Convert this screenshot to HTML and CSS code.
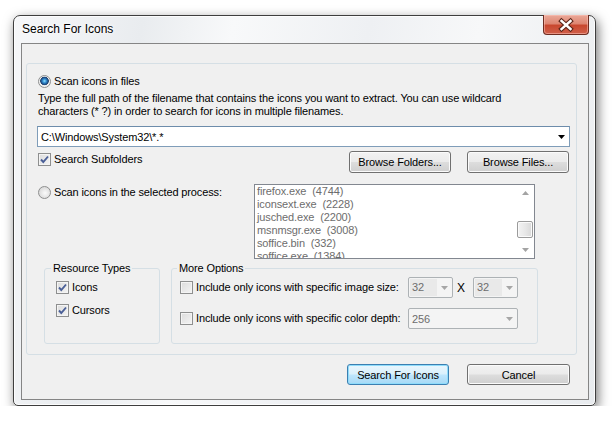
FILE: index.html
```html
<!DOCTYPE html>
<html lang="en">
<head>
    <meta charset="UTF-8">
    <title>Search For Icons</title>
    <link rel="stylesheet" href="styles.css">
</head>
<body>
    <div class="window">
        <div class="titlebar">
            <span class="title">Search For Icons</span>
            <div class="close-btn">
                <svg width="46" height="20" viewBox="0 0 46 20">
                    <path d="M18.5 6 L27.5 14 M27.5 6 L18.5 14" stroke="#5a2418" stroke-width="4.6" stroke-linecap="square" fill="none"/>
                    <path d="M18.5 6 L27.5 14 M27.5 6 L18.5 14" stroke="#fff" stroke-width="2.4" stroke-linecap="square" fill="none"/>
                </svg>
            </div>
        </div>
        <div class="client">
            <div class="main-group">
                <div class="radio-row">
                    <span class="radio checked"></span>
                    <span>Scan icons in files</span>
                </div>
                <p class="hint">Type the full path of the filename that contains the icons you want to extract. You can use wildcard<br>characters (* ?) in order to search for icons in multiple filenames.</p>
                <div class="combo path-combo">
                    <span class="combo-value">C:\Windows\System32\*.*</span>
                    <svg class="arrow" width="7" height="4" viewBox="0 0 7 4"><path d="M0 0h7L3.5 4z" fill="#000"/></svg>
                </div>
                <div class="row subfolders-row">
                    <div class="check-row">
                        <span class="checkbox checked">
                            <svg width="11" height="11" viewBox="0 0 11 11"><path d="M2 5.5 L4.3 8 L9 2.5" stroke="#4a5f97" stroke-width="1.9" fill="none"/></svg>
                        </span>
                        <span>Search Subfolders</span>
                    </div>
                    <button class="btn browse-folders">Browse Folders...</button>
                    <button class="btn">Browse Files...</button>
                </div>
                <div class="row process-row">
                    <div class="radio-row process-label">
                        <span class="radio"></span>
                        <span>Scan icons in the selected process:</span>
                    </div>
                    <div class="listbox">
                        <div class="list-items">
                            <div class="list-item">firefox.exe  (4744)</div>
                            <div class="list-item">iconsext.exe  (2228)</div>
                            <div class="list-item">jusched.exe  (2200)</div>
                            <div class="list-item">msnmsgr.exe  (3008)</div>
                            <div class="list-item">soffice.bin  (332)</div>
                            <div class="list-item">soffice.exe  (1384)</div>
                        </div>
                        <div class="scrollbar">
                            <svg class="scroll-arrow" width="7" height="4" viewBox="0 0 7 4"><path d="M0 4h7L3.5 0z" fill="#a3a3a3"/></svg>
                            <div class="scroll-track"><div class="scroll-thumb"></div></div>
                            <svg class="scroll-arrow" width="7" height="4" viewBox="0 0 7 4"><path d="M0 0h7L3.5 4z" fill="#a3a3a3"/></svg>
                        </div>
                    </div>
                </div>
                <div class="row options-row">
                    <fieldset class="group resource-types">
                        <legend>Resource Types</legend>
                        <div class="check-row first">
                            <span class="checkbox checked">
                                <svg width="11" height="11" viewBox="0 0 11 11"><path d="M2 5.5 L4.3 8 L9 2.5" stroke="#4a5f97" stroke-width="1.9" fill="none"/></svg>
                            </span>
                            <span>Icons</span>
                        </div>
                        <div class="check-row second">
                            <span class="checkbox checked">
                                <svg width="11" height="11" viewBox="0 0 11 11"><path d="M2 5.5 L4.3 8 L9 2.5" stroke="#4a5f97" stroke-width="1.9" fill="none"/></svg>
                            </span>
                            <span>Cursors</span>
                        </div>
                    </fieldset>
                    <fieldset class="group more-options">
                        <legend>More Options</legend>
                        <div class="option-row first">
                            <div class="check-row option-label">
                                <span class="checkbox"></span>
                                <span>Include only icons with specific image size:</span>
                            </div>
                            <div class="combo small-combo disabled">
                                <span class="combo-value edit">32</span>
                                <svg class="arrow" width="7" height="4" viewBox="0 0 7 4"><path d="M0 0h7L3.5 4z" fill="#a6a6a6"/></svg>
                            </div>
                            <span class="times">X</span>
                            <div class="combo small-combo disabled">
                                <span class="combo-value edit">32</span>
                                <svg class="arrow" width="7" height="4" viewBox="0 0 7 4"><path d="M0 0h7L3.5 4z" fill="#a6a6a6"/></svg>
                            </div>
                        </div>
                        <div class="option-row second">
                            <div class="check-row option-label">
                                <span class="checkbox"></span>
                                <span>Include only icons with specific color depth:</span>
                            </div>
                            <div class="combo depth-combo disabled">
                                <span class="combo-value">256</span>
                                <svg class="arrow" width="7" height="4" viewBox="0 0 7 4"><path d="M0 0h7L3.5 4z" fill="#a6a6a6"/></svg>
                            </div>
                        </div>
                    </fieldset>
                </div>
            </div>
            <div class="dialog-buttons">
                <button class="btn default">Search For Icons</button>
                <button class="btn cancel">Cancel</button>
            </div>
        </div>
    </div>
</body>
</html>
```

FILE: styles.css
```css
body {
    margin: 0;
    background-color: #fff;
    font-family: "Liberation Sans", Arial, sans-serif;
    font-size: 11px;
    letter-spacing: -0.13px;
    color: #000;
}
.window {
    box-sizing: border-box;
    width: 583px;
    height: 391px;
    margin: 15px 0 0 13px;
    padding: 0 6px 5px 7px;
    border: 1px solid #3e3e3e;
    border-radius: 7px 7px 5px 5px;
    background: linear-gradient(100deg, #f6f7f9 0%, #e9ecef 20%, #f8f9fa 34%, #eef0f3 55%, #f7f8f9 72%, #e8ebee 100%);
    box-shadow: 2px 4px 12px rgba(0, 0, 0, 0.55), inset 0 0 0 1px rgba(255, 255, 255, 0.8);
    display: flex;
    flex-direction: column;
}
.titlebar {
    height: 27px;
    flex-shrink: 0;
    display: flex;
    align-items: flex-start;
    justify-content: space-between;
}
.title {
    margin: 6px 0 0 1px;
    font-size: 12px;
    line-height: 15px;
    letter-spacing: 0;
    text-shadow: 0 0 6px #fff, 0 0 3px #fff;
}
.close-btn {
    box-sizing: border-box;
    width: 46px;
    height: 20px;
    margin-top: -1px;
    border: 1px solid #6e2c20;
    border-top: none;
    border-radius: 0 0 4px 4px;
    background: linear-gradient(#eaa999 0%, #de8672 45%, #c9482f 55%, #d0604a 100%);
    box-shadow: inset 0 0 0 1px rgba(255, 200, 190, 0.5);
}
.close-btn svg {
    display: block;
    margin: 0 0 0 -1px;
}
.client {
    flex: 1;
    box-sizing: border-box;
    border: 1px solid #858585;
    background-color: #f0f0f0;
}
.main-group {
    box-sizing: border-box;
    width: 551px;
    height: 292px;
    margin: 19px 0 0 4px;
    padding: 11px 7px 0 11px;
    border: 1px solid #d5dfe5;
    border-radius: 3px;
}
.radio-row, .check-row {
    display: flex;
    align-items: center;
    height: 13px;
    line-height: 13px;
    white-space: nowrap;
}
.radio {
    box-sizing: border-box;
    width: 13px;
    height: 13px;
    margin-right: 3px;
    border: 1px solid #8e8f8f;
    border-radius: 50%;
    background: radial-gradient(circle at 55% 55%, #fbfbfb 0%, #e2e2e2 55%, #cfcfcf 100%);
    flex-shrink: 0;
}
.radio.checked {
    background: radial-gradient(circle at 50% 45%, #9be0ff 0, #3a9ad9 1.6px, #1d4f8c 3.4px, #27476e 4px, #eeeeee 4.6px, #f6f6f6 100%);
}
.checkbox {
    box-sizing: border-box;
    width: 13px;
    height: 13px;
    margin-right: 3px;
    border: 1px solid #8e8f8f;
    background: linear-gradient(135deg, #dcdcdc 0%, #f4f4f4 100%);
    box-shadow: inset 0 0 0 1px #f4f4f4;
    flex-shrink: 0;
}
.checkbox svg {
    display: block;
}
.hint {
    margin: 4px 0 0;
    line-height: 13px;
    white-space: nowrap;
}
.combo {
    box-sizing: border-box;
    display: flex;
    align-items: center;
    height: 21px;
    border: 1px solid #abadb3;
    background-color: #fff;
}
.combo .arrow {
    margin-left: auto;
    margin-right: 4px;
}
.path-combo {
    margin: 8px -1px 0;
    border-color: #7f9db9;
    border-top-color: #6d8cab;
}
.path-combo .combo-value {
    padding-left: 3px;
}
.row {
    display: flex;
}
.subfolders-row {
    margin-top: 4px;
    height: 22px;
}
.subfolders-row .check-row {
    margin-top: 2px;
}
.browse-folders {
    margin-left: auto;
    margin-right: 16px;
}
.btn {
    box-sizing: border-box;
    width: 102px;
    height: 22px;
    padding: 0;
    border: 1px solid #707070;
    border-radius: 3px;
    background: linear-gradient(#f2f2f2 0%, #ebebeb 48%, #dddddd 52%, #cfcfcf 100%);
    box-shadow: inset 0 0 0 1px #fbfbfb;
    font-family: "Liberation Sans", Arial, sans-serif;
    font-size: 11px;
    letter-spacing: -0.13px;
    color: #000;
}
.process-row {
    margin-top: 11px;
}
.process-label {
    width: 216px;
    margin-top: 2px;
}
.listbox {
    box-sizing: border-box;
    display: flex;
    width: 281px;
    height: 75px;
    border: 1px solid #828790;
    background-color: #fff;
    color: #6d6d6d;
}
.list-items {
    flex: 1;
    overflow: hidden;
}
.list-item {
    padding-left: 2px;
    line-height: 13px;
    white-space: pre;
}
.scrollbar {
    width: 17px;
    display: flex;
    flex-direction: column;
    align-items: center;
}
.scroll-arrow {
    margin: 6px 0;
}
.scroll-track {
    flex: 1;
    width: 100%;
}
.scroll-thumb {
    box-sizing: border-box;
    width: 16px;
    height: 17px;
    margin: 20px 0 0 0;
    border: 1px solid #9b9b9b;
    border-radius: 2px;
    background: linear-gradient(90deg, #f3f3f3 0%, #e8e8e8 50%, #d8d8d8 100%);
    box-shadow: inset 0 0 0 1px #fafafa;
}
.options-row {
    margin-top: 3px;
}
.group {
    box-sizing: border-box;
    height: 82px;
    margin: 0;
    padding: 0;
    border: 1px solid #d5dfe5;
    border-radius: 3px;
}
.group legend {
    margin-left: 6px;
    padding: 0 2px;
    line-height: 13px;
}
.resource-types {
    width: 116px;
    margin-left: 6px;
}
.resource-types .check-row {
    margin-left: 11px;
}
.resource-types .first {
    margin-top: 6px;
}
.resource-types .second {
    margin-top: 10px;
}
.more-options {
    width: 367px;
    margin-left: 11px;
}
.more-options legend {
    margin-left: 5px;
}
.option-row {
    display: flex;
    align-items: center;
    height: 21px;
    margin-left: 8px;
}
.option-row.first {
    margin-top: 2px;
}
.option-row.second {
    margin-top: 10px;
}
.option-label {
    width: 228px;
}
.combo.disabled {
    border-color: #adb2b5;
    border-radius: 2px;
    background-color: #f4f4f4;
    color: #6d6d6d;
}
.small-combo {
    width: 45px;
}
.combo-value.edit {
    padding: 0 2px;
    height: 17px;
    line-height: 17px;
    width: 23px;
    margin-left: 1px;
    background-color: #e9e9e9;
}
.times {
    box-sizing: border-box;
    width: 20px;
    padding-left: 4px;
    font-size: 12px;
}
.depth-combo {
    width: 110px;
    padding-left: 3px;
}
.dialog-buttons {
    display: flex;
    justify-content: flex-end;
    margin-top: 9px;
    padding-right: 18px;
}
.btn.default {
    height: 21px;
    margin-right: 18px;
    border-color: #3c7fb1;
    background: linear-gradient(#eaf6fd 0%, #d9f0fc 48%, #bee6fd 52%, #a7d9f5 100%);
    box-shadow: inset 0 0 0 1px #8fdcfb;
}
.btn.cancel {
    width: 103px;
    height: 21px;
}
```
